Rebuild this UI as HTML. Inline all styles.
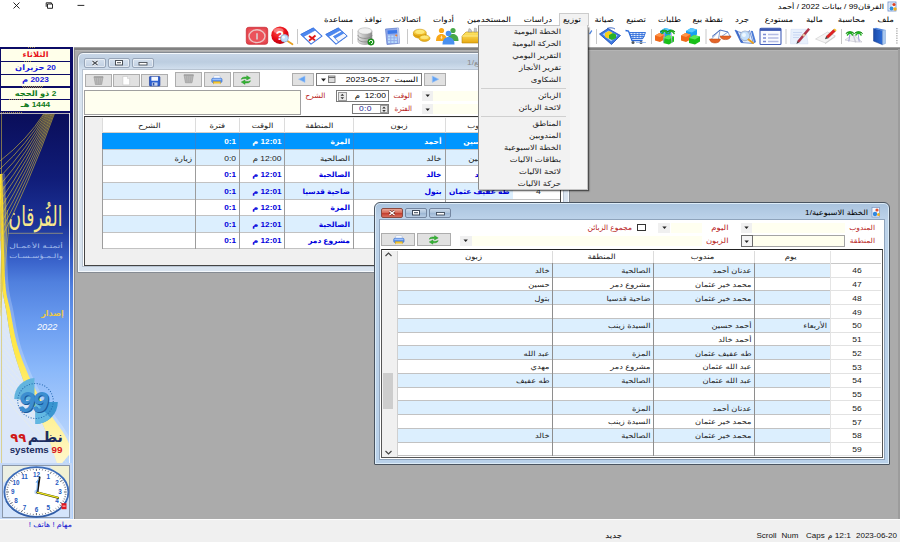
<!DOCTYPE html>
<html lang="ar"><head><meta charset="utf-8"><title>الفرقان99</title>
<style>
html,body{margin:0;padding:0;background:#fff;}
body{width:900px;height:542px;overflow:hidden;position:relative;font-family:"Liberation Sans","DejaVu Sans",sans-serif;font-size:7.3px;color:#000;}
div,span{position:absolute;box-sizing:border-box;white-space:nowrap;}
.t{direction:rtl;text-align:right;line-height:12px;height:12px;transform:scaleX(1.18);transform-origin:100% 50%;}
.c{text-align:center;direction:rtl;line-height:12px;height:12px;transform:scaleX(1.18);transform-origin:50% 50%;}
.l{direction:ltr;text-align:left;line-height:12px;height:12px;transform:scaleX(1.18);transform-origin:0 50%;}
svg{position:absolute;overflow:visible;}
.btn{background:#e1e1e1;border:1px solid #adadad;}
.yl{background:#fffff0;}
.red{color:#b81c1c;}
.bb{color:#0000c8;font-weight:bold;}
.mi{direction:rtl;text-align:right;right:339px;width:100px;height:12px;line-height:12px;font-size:7.3px;color:#1a1a1a;}
</style></head>
<body>
<div class="t " style="left:684px;width:200px;top:0.5px;font-size:7.0px;">الفرقان99 / بيانات 2022 / أحمد</div>
<svg style="left:887px;top:1px" width="11" height="11" viewBox="0 0 11 11"><rect x="1" y="1" width="8" height="9" fill="#f4f8ff" stroke="#6a8cc8" stroke-width="0.8"/><path d="M2.5 3h3M2.5 5h2" stroke="#88a0d0" stroke-width="0.8"/><circle cx="7" cy="3.5" r="1.6" fill="#e04020"/><circle cx="4.5" cy="7.5" r="2" fill="#3090e0"/><circle cx="8" cy="8" r="1.7" fill="#f0b020"/></svg>
<svg style="left:0;top:0" width="100" height="12"><path d="M13.500 2.500l6 6m0-6l-6 6" stroke="#111" stroke-width="0.900" fill="none"/><path d="M47.500 4h5v4.300h-5zM46.200 6.800v-4h5.200v1.200" stroke="#111" stroke-width="0.900" fill="none"/><path d="M77.500 5.400h6.800" stroke="#111" stroke-width="0.900"/></svg>
<div style="left:559px;top:13px;width:30px;height:13px;background:#f2f2f2;border:1px solid #cccccc;border-bottom:none;"></div>
<div class="t " style="left:694px;width:200px;top:13.5px;font-size:7.3px;">ملف</div>
<div class="t " style="left:665px;width:200px;top:13.5px;font-size:7.3px;">محاسبة</div>
<div class="t " style="left:622.5px;width:200px;top:13.5px;font-size:7.3px;">مالية</div>
<div class="t " style="left:592.5px;width:200px;top:13.5px;font-size:7.3px;">مستودع</div>
<div class="t " style="left:549px;width:200px;top:13.5px;font-size:7.3px;">جرد</div>
<div class="t " style="left:523px;width:200px;top:13.5px;font-size:7.3px;">نقطة بيع</div>
<div class="t " style="left:481px;width:200px;top:13.5px;font-size:7.3px;">طلبات</div>
<div class="t " style="left:446px;width:200px;top:13.5px;font-size:7.3px;">تصنيع</div>
<div class="t " style="left:414px;width:200px;top:13.5px;font-size:7.3px;">صيانة</div>
<div class="t " style="left:381px;width:200px;top:13.5px;font-size:7.3px;">توزيع</div>
<div class="t " style="left:352px;width:200px;top:13.5px;font-size:7.3px;">دراسات</div>
<div class="t " style="left:311px;width:200px;top:13.5px;font-size:7.3px;">المستخدمين</div>
<div class="t " style="left:253.5px;width:200px;top:13.5px;font-size:7.3px;">أدوات</div>
<div class="t " style="left:221px;width:200px;top:13.5px;font-size:7.3px;">اتصالات</div>
<div class="t " style="left:182px;width:200px;top:13.5px;font-size:7.3px;">نوافذ</div>
<div class="t " style="left:153px;width:200px;top:13.5px;font-size:7.3px;">مساعدة</div>
<svg style="left:0;top:0" width="900" height="47" viewBox="0 0 900 47"><defs><linearGradient id="gb" x1="0" y1="0" x2="1" y2="0"><stop offset="0" stop-color="#1a4aa8"/><stop offset="1" stop-color="#2c6cd8"/></linearGradient><radialGradient id="gr" cx="0.4" cy="0.3" r="0.75"><stop offset="0" stop-color="#ff5048"/><stop offset="0.6" stop-color="#e40814"/><stop offset="1" stop-color="#b80010"/></radialGradient><linearGradient id="gg" x1="0" y1="0" x2="0" y2="1"><stop offset="0" stop-color="#ffe868"/><stop offset="1" stop-color="#e8a810"/></linearGradient><linearGradient id="gd" x1="0" y1="0" x2="1" y2="0"><stop offset="0" stop-color="#e8e8e8"/><stop offset="0.5" stop-color="#b8b8b8"/><stop offset="1" stop-color="#8c8c8c"/></linearGradient></defs><rect x="896.3" y="28.0" width="1.2" height="1.2" fill="#9c9c9c"/><rect x="896.3" y="30.4" width="1.2" height="1.2" fill="#9c9c9c"/><rect x="896.3" y="32.8" width="1.2" height="1.2" fill="#9c9c9c"/><rect x="896.3" y="35.2" width="1.2" height="1.2" fill="#9c9c9c"/><rect x="896.3" y="37.6" width="1.2" height="1.2" fill="#9c9c9c"/><rect x="896.3" y="40.0" width="1.2" height="1.2" fill="#9c9c9c"/><rect x="896.3" y="42.4" width="1.2" height="1.2" fill="#9c9c9c"/><path d="M841.5 29V44" stroke="#c8c8c8" stroke-width="1"/><path d="M786 29V44" stroke="#c8c8c8" stroke-width="1"/><path d="M706 29V44" stroke="#c8c8c8" stroke-width="1"/><path d="M651.5 29V44" stroke="#c8c8c8" stroke-width="1"/><path d="M596.5 29V44" stroke="#c8c8c8" stroke-width="1"/><path d="M407.5 29V44" stroke="#c8c8c8" stroke-width="1"/><path d="M352.5 29V44" stroke="#c8c8c8" stroke-width="1"/><path d="M297.5 29V44" stroke="#c8c8c8" stroke-width="1"/><path d="M873.5 28.5l9 2.2v14l-9-3.6z" fill="url(#gb)" stroke="#143c90" stroke-width="0.5"/><path d="M873.5 28.5l2.5-0.8 9.5 2.4-3 0.6z" fill="#4c84e0"/><path d="M882.5 30.7l3-0.6v13.4l-3 1.2z" fill="#a8c8f0" stroke="#6c94d0" stroke-width="0.4"/><path d="M845 40l8-6 3 8zM853 34l9 8h-7z" fill="#f0f0f4" stroke="#b4b4c0" stroke-width="0.5"/><path d="M850 33l-1.2 8.5M858 33l1.2 8.5" stroke="#a0a0d8" stroke-width="1"/><path d="M846 33.5c1.5-2.5 6.5-2.5 8 0c-1.5-1-2.5-1-4-0.4c-1.4-0.6-2.500-0.600-4 0.4z M854.5 33.500c1.500-2.500 6.500-2.500 8 0c-1.500-1-2.500-1-4-0.400c-1.400-0.600-2.500-0.600-4 0.400z" fill="#18a818" stroke="#108810" stroke-width="0.8"/><path d="M847 35.500l3-3.500 3 3.500M855.500 35.500l3-3.500 3 3.500" stroke="#20b020" stroke-width="1.3" fill="none"/><path d="M815.5 39l12-7 8 4-10 7z" fill="#f4f4f4" stroke="#c0c0c0" stroke-width="0.5"/><path d="M825 43l10-7v1.300l-10 7z" fill="#d0d0d0"/><path d="M826 36.500l7.500-7 2 1.800-7.500 7z" fill="#e02020" stroke="#a01010" stroke-width="0.4"/><path d="M833.500 29.500l1.200-1 2 1.800-1.200 1z" fill="#f0c020"/><path d="M826 36.500l2 1.800-3 1z" fill="#404040"/><path d="M791 29.3h15l2 14.5h-17.5z" fill="#e8f0fc" stroke="#ccd8f0" stroke-width="0.5"/><path d="M793 32.5h9M793 35h8M793 37.5h6" stroke="#b4c8ec" stroke-width="0.6"/><path d="M797.3 41.3l10.8-13 1.7 1.3-10.8 13z" fill="#b43048" stroke="#8c1828" stroke-width="0.4"/><path d="M802.2 35.4l1.5-1.8 1.7 1.3-1.5 1.8z" fill="#e8c8a0"/><path d="M797.3 41.3l1.7 1.3-2.6 1.3z" fill="#404040"/><rect x="760" y="28.300" width="21" height="16.200" rx="1" fill="#fafbff" stroke="#4460b8" stroke-width="1.100"/><rect x="760" y="28.300" width="21" height="2.600" fill="#3c58b0"/><path d="M763 34.500h3M763 38h3M763 41.500h3" stroke="#7c8cd4" stroke-width="1.300"/><path d="M768 34.500h10.500M768 38h10.500M768 41.500h10.500" stroke="#b4bce4" stroke-width="1.300"/><path d="M735 30l6 12.5 12.5 1-4-13c-2 3-10 3-14.5-0.5z" fill="#e6effb" stroke="#4c78d0" stroke-width="0.8" stroke-linejoin="round"/><path d="M735 30l2.2 0.7 6.3 12-2.5-0.2z" fill="#3c68c8"/><path d="M750.8 30.7l2 0.3 3.2 11-1.8 1.2z" fill="#4c7cd8"/><circle cx="745" cy="35.8" r="4.8" fill="#c4e0fc" stroke="#a8b8d0" stroke-width="1.1"/><circle cx="744" cy="35" r="2" fill="#eef8ff"/><path d="M748.500 39.500l4.500 3.500" stroke="#e8a020" stroke-width="2" stroke-linecap="round"/><path d="M712 36.500l8-6.500 8 2" stroke="#3c64b8" stroke-width="0.900" fill="none"/><path d="M720 30l-8.500 9M720 30l-1.500 9M728 32l-6.500 4.500M728 32l2 4.500" stroke="#3c64b8" stroke-width="0.600"/><path d="M709.500 39h11c-0.500 3-3 4-5.500 4s-5-1-5.500-4z" fill="#e46428" stroke="#b84410" stroke-width="0.500"/><path d="M720 36h11c-0.500 2.800-3 3.600-5.500 3.600s-5-0.800-5.500-3.600z" fill="#e46428" stroke="#b84410" stroke-width="0.500"/><path d="M686 31l5-3 6 1.500v5l-5 3-6-1.500z" fill="#18a0f0"/><path d="M686 31l5-3 6 1.500-5 3z" fill="#58c8ff"/><path d="M681 35.500l4.500-2.500 5 1.500v5l-4.500 2.500-5-1.500z" fill="#f06818"/><path d="M681 35.500l4.500-2.500 5 1.500-4.500 2.500z" fill="#ff9448"/><path d="M689 38l5-3 6 1.500v5l-5 3-6-1.500z" fill="#18c018"/><path d="M689 38l5-3 6 1.500-5 3z" fill="#58e858"/><path d="M660 31l5-3 6 1.500v5l-5 3-6-1.500z" fill="#18a0f0"/><path d="M660 31l5-3 6 1.500-5 3z" fill="#58c8ff"/><path d="M655 35.500l4.500-2.500 5 1.500v5l-4.500 2.500-5-1.500z" fill="#f06818"/><path d="M655 35.500l4.500-2.500 5 1.500-4.500 2.500z" fill="#ff9448"/><path d="M663 38l5-3 6 1.500v5l-5 3-6-1.500z" fill="#18c018"/><path d="M663 38l5-3 6 1.500-5 3z" fill="#58e858"/><path d="M664.500 31l-1 12M671 31l1 12" stroke="#b0a8d8" stroke-width="0.900"/><path d="M660.500 32c1.300-2.500 6-2.500 7.500 0c-1.500-1-2.500-1-3.800-0.400c-1.300-0.600-2.300-0.600-3.700 0.400z M667.500 32c1.300-2.500 6-2.500 7.500 0c-1.500-1-2.500-1-3.800-0.400c-1.300-0.600-2.300-0.600-3.700 0.400z" fill="#18a818" stroke="#108810" stroke-width="0.800"/><path d="M661.500 34l3-3.500 3 3.500M668.500 34l3-3.500 3 3.500" stroke="#20b020" stroke-width="1.200" fill="none"/><path d="M625.500 30.500l3 0.500 3.500 9.500h10.500" stroke="#2868d8" stroke-width="1.300" fill="none"/><path d="M629.500 32.500h16l-2.500 6h-11.500z" fill="#dce8fc" stroke="#2868d8" stroke-width="0.900"/><path d="M633 32.500v6M636 32.500v6M639 32.500v6M642 32.500v6M630 34.500h15M630.500 36.500h14" stroke="#2868d8" stroke-width="0.800"/><circle cx="633" cy="42.500" r="1.500" fill="#505860"/><circle cx="641" cy="42.500" r="1.500" fill="#505860"/><path d="M636 42.500h10" stroke="#88b0f0" stroke-width="0.800"/><path d="M599.500 34l8.500-5.500 12.500 7-9 9z" fill="#3c78e0" stroke="#1c4cb8" stroke-width="0.800" stroke-linejoin="round"/><path d="M602.500 34.200l6-3.700 9 5-6.300 6z" fill="#a8c8f8"/><path d="M605 33l4-2 3 1.500v4l-4 2-3-1.500z" fill="#f8d018"/><path d="M609 35l4-2 3 1.500v3.500l-4 2-3-1.500z" fill="#28b028"/><path d="M607 28.500c2-1 6-1 8 0.500" stroke="#1c4cb8" stroke-width="0.800" fill="none"/><path d="M462 36l4-4h14v11h-18z" fill="url(#gg)" stroke="#b88808" stroke-width="0.600"/><path d="M462 36h18" stroke="#fff4a0" stroke-width="0.800"/><path d="M468 32l1-3.500 2 1 1 2.500zM474 32l0.500-4 2 0.500v3.500z" fill="#c8c8c8" stroke="#8c8c8c" stroke-width="0.400"/><circle cx="441.500" cy="30.500" r="2.600" fill="#f8a818"/><path d="M436 41c0-5 2.500-7 5.500-7s5.500 2 5.500 7z" fill="#f8a818"/><circle cx="453" cy="30.500" r="2.600" fill="#48a848"/><path d="M447.500 41c0-5 2.500-7 5.500-7s5.500 2 5.500 7z" fill="#48a848"/><circle cx="448.500" cy="33.500" r="2.800" fill="#4890f0"/><path d="M442.500 44.500c0-5.500 3-7.500 6-7.500s6 2 6 7.500z" fill="#4890f0"/><path d="M441.500 35l-1 3 1 1 1-1z" fill="#fff" opacity="0.700"/><ellipse cx="419.800" cy="34.600" rx="6.500" ry="3.600" fill="#e8a810" stroke="#c89408" stroke-width="0.500"/><ellipse cx="419.800" cy="32.800" rx="6.500" ry="3.600" fill="url(#gg)" stroke="#c89408" stroke-width="0.600"/><ellipse cx="419.800" cy="32" rx="4.500" ry="2" fill="#fff088" opacity="0.750"/><ellipse cx="424.500" cy="38.200" rx="5.500" ry="3.200" fill="url(#gg)" stroke="#c89408" stroke-width="0.600"/><ellipse cx="424.500" cy="37.500" rx="3.800" ry="1.700" fill="#fff088" opacity="0.700"/><path d="M385.500 29l13-1 1 15.300-12.500 1.200z" fill="#90a8e8" stroke="#5c78c8" stroke-width="0.700" stroke-linejoin="round"/><path d="M398.500 28l1 15.300-1.300 0.200-1-15.400z" fill="#c4d0f0"/><path d="M387.500 30.500l9.500-0.600 0.200 3.400-9.500 0.600z" fill="#3c78e8"/><rect x="388.0" y="35.5" width="2.300" height="1.900" fill="#b8dcfc"/><rect x="391.3" y="35.5" width="2.300" height="1.900" fill="#b8dcfc"/><rect x="394.6" y="35.5" width="2.300" height="1.900" fill="#b8dcfc"/><rect x="388.0" y="38.3" width="2.300" height="1.900" fill="#b8dcfc"/><rect x="391.3" y="38.3" width="2.300" height="1.900" fill="#b8dcfc"/><rect x="394.6" y="38.3" width="2.300" height="1.900" fill="#b8dcfc"/><rect x="388.0" y="41.1" width="2.300" height="1.900" fill="#b8dcfc"/><rect x="391.3" y="41.1" width="2.300" height="1.900" fill="#b8dcfc"/><rect x="394.6" y="41.1" width="2.300" height="1.900" fill="#b8dcfc"/><circle cx="396.300" cy="35.500" r="1.100" fill="#f08030"/><path d="M358 31v10c0 2 3 3.500 7 3.500s7-1.500 7-3.500v-10z" fill="url(#gd)" stroke="#8c8c8c" stroke-width="0.500"/><ellipse cx="365" cy="31" rx="7" ry="3.200" fill="#f0f0f0" stroke="#a0a0a0" stroke-width="0.500"/><path d="M358 35c0 2 3 3.400 7 3.400s7-1.400 7-3.400M358 38.500c0 2 3 3.400 7 3.400s7-1.400 7-3.400" stroke="#7c7c7c" stroke-width="0.700" fill="none"/><circle cx="371" cy="42" r="3.200" fill="#189818" stroke="#0c6c0c" stroke-width="0.500"/><path d="M369.300 42a1.700 1.700 0 1 1 1.700 1.700" stroke="#fff" stroke-width="0.900" fill="none"/><path d="M301 34.400l12.300-6.300 8.700 8-11 8z" fill="#ffffff" stroke="#3c74e0" stroke-width="1.100" stroke-linejoin="round"/><path d="M301 34.400l12.300-6.300 2.200 2-12.200 6.600z" fill="#4c88f0" stroke="#3c74e0" stroke-width="0.600" stroke-linejoin="round"/><path d="M309 36l6 4.300M315.5 35.500l-6.500 5.300" stroke="#e01818" stroke-width="1.900"/><path d="M326 34.400l12.300-6.300 8.700 8-11 8z" fill="#ffffff" stroke="#3c74e0" stroke-width="1.100" stroke-linejoin="round"/><path d="M326 34.400l12.300-6.300 2.200 2-12.200 6.600z" fill="#4c88f0" stroke="#3c74e0" stroke-width="0.600" stroke-linejoin="round"/><path d="M333.5 36.500l9-5 4.500 4.500-8.500 6z" fill="#f4f6fc" stroke="#3c74e0" stroke-width="0.800" stroke-linejoin="round"/><path d="M333.5 36.500l9-5 1.700 1.700-9 5.200z" fill="#4c88f0"/><circle cx="280" cy="35.200" r="8.700" fill="url(#gr)"/><ellipse cx="278.500" cy="30.500" rx="5" ry="2.600" fill="#ffffff" opacity="0.350"/><text x="279.800" y="40" text-anchor="middle" font-family="'Liberation Sans',sans-serif" font-size="13.500" font-weight="bold" fill="#ffffff">?</text><path d="M287.500 41l5 3.300" stroke="#e8a020" stroke-width="1.700" stroke-linecap="round"/><circle cx="284.500" cy="38.300" r="3.700" fill="#c0e0fc" stroke="#98b4d8" stroke-width="0.900"/><circle cx="283.500" cy="37.300" r="1.500" fill="#f0faff"/><rect x="246.300" y="27.300" width="21.400" height="17" rx="2.500" fill="#e4444c" stroke="#cc3038" stroke-width="0.800"/><rect x="248" y="29" width="18" height="13.500" rx="3" fill="#ee5a62" opacity="0.700"/><ellipse cx="257" cy="36.200" rx="8" ry="6.400" fill="none" stroke="#ecc4c4" stroke-width="1.400"/><path d="M257 33.300v6.200" stroke="#dcc8c8" stroke-width="1.700"/></svg>
<svg style="left:588px;top:28px" width="5" height="8"><path d="M1 5.500l2.500-3.500 0.800 1-2.300 3.500z" fill="#4c84e0"/></svg>
<div style="left:74px;top:47px;width:826px;height:472px;background:#ababab;border-left:1px solid #8a8a8a;"></div>
<div style="left:74px;top:47px;width:826px;height:1.4px;background:#a4a4a4;"></div>
<div style="left:74px;top:48.4px;width:826px;height:1.5px;background:#808080;"></div>
<div style="left:75px;top:49.9px;width:825px;height:1.2px;background:#b4b4b4;"></div>
<div style="left:898px;top:49px;width:2px;height:470px;background:#9c9c9c;"></div>
<div style="left:0px;top:519px;width:900px;height:23px;background:#f0f0f0;border-top:1.3px solid #fcfcfc;"></div>
<div class="l " style="left:756.5px;width:200px;top:530px;font-size:8px;color:#111;transform:none;">Scroll</div>
<div class="l " style="left:781.5px;width:200px;top:530px;font-size:8px;color:#111;transform:none;">Num</div>
<div class="l " style="left:806px;width:200px;top:530px;font-size:8px;color:#111;transform:none;">Caps</div>
<div class="l " style="left:856px;width:200px;top:530px;font-size:8px;color:#111;transform:none;">2023-06-20</div>
<div class="t " style="left:650.5px;width:200px;top:530px;font-size:7.3px;color:#111;transform:scaleX(1.05);"><span style="position:static;font-size:8px">12:1</span> م</div>
<div class="t " style="left:422px;width:200px;top:530px;font-size:7.3px;">جديد</div>
<div class="t " style="left:-128px;width:200px;top:519px;font-size:7.2px;color:#2020d0;transform:scaleX(1.1);">مهام ! هاتف !</div>
<div style="left:0;top:47px;width:72.7px;height:472px;background:#0b0b66;"></div>
<div style="left:28px;top:47.3px;width:7px;height:1.2px;background:repeating-linear-gradient(115deg,#c8b040 0,#c8b040 0.8px,transparent 0.8px,transparent 1.8px);opacity:0.75;"></div>
<div style="left:24px;top:60.7px;width:7px;height:1.2px;background:repeating-linear-gradient(115deg,#c8b040 0,#c8b040 0.8px,transparent 0.8px,transparent 1.8px);opacity:0.75;"></div>
<div style="left:22px;top:86.4px;width:21px;height:1.2px;background:repeating-linear-gradient(115deg,#c8b040 0,#c8b040 0.8px,transparent 0.8px,transparent 1.8px);opacity:0.75;"></div>
<div style="left:9px;top:99.1px;width:16px;height:1.2px;background:repeating-linear-gradient(115deg,#c8b040 0,#c8b040 0.8px,transparent 0.8px,transparent 1.8px);opacity:0.75;"></div>
<div style="left:1px;top:111.6px;width:34px;height:1.2px;background:repeating-linear-gradient(115deg,#c8b040 0,#c8b040 0.8px,transparent 0.8px,transparent 1.8px);opacity:0.75;"></div>
<div style="left:1px;top:49px;width:69px;height:11.5px;background:#ffffea;"></div>
<div class="c" style="left:1px;width:69px;top:48.75px;color:#e8141a;font-weight:bold;font-size:7.6px;transform:scaleX(1.09);">الثلاثاء</div>
<div style="left:1px;top:62px;width:69px;height:12px;background:#ffffea;"></div>
<div class="c" style="left:1px;width:69px;top:62.0px;color:#1a1ae0;font-weight:bold;font-size:7.6px;transform:scaleX(1.09);">20 حزيران</div>
<div style="left:1px;top:74.5px;width:69px;height:11.5px;background:#ffffea;"></div>
<div class="c" style="left:1px;width:69px;top:74.25px;color:#1a1ae0;font-weight:bold;font-size:7.6px;transform:scaleX(1.09);">2023 م</div>
<div style="left:1px;top:88px;width:69px;height:11px;background:#ffffea;"></div>
<div class="c" style="left:1px;width:69px;top:87.5px;color:#0f7a1a;font-weight:bold;font-size:7.6px;transform:scaleX(1.09);">2 ذو الحجه</div>
<div style="left:1px;top:99.8px;width:69px;height:11.2px;background:#ffffea;"></div>
<div class="c" style="left:1px;width:69px;top:99.39999999999999px;color:#0f7a1a;font-weight:bold;font-size:7.6px;transform:scaleX(1.09);">1444 هـ</div>
<svg style="left:0px;top:114px" width="70" height="349" viewBox="0 0 69 349" preserveAspectRatio="none"><defs><linearGradient id="lg1" x1="0" y1="0" x2="0" y2="1"><stop offset="0" stop-color="#0a0e5a"/><stop offset="0.19" stop-color="#101c78"/><stop offset="0.33" stop-color="#1c3498"/><stop offset="0.44" stop-color="#3a64cc"/><stop offset="0.5" stop-color="#5080de"/><stop offset="0.62" stop-color="#6a9cf0"/><stop offset="0.76" stop-color="#8ab8fa"/><stop offset="0.93" stop-color="#b0d0fc"/><stop offset="1" stop-color="#bcd8fc"/></linearGradient><linearGradient id="lg2" gradientUnits="userSpaceOnUse" x1="0" y1="86" x2="0" y2="349"><stop offset="0" stop-color="#ffe030"/><stop offset="0.6" stop-color="#ffe84c"/><stop offset="0.85" stop-color="#fff29c"/><stop offset="1" stop-color="#fff8cc"/></linearGradient><clipPath id="cp1"><rect x="0" y="0" width="69" height="349"/></clipPath></defs><rect x="0" y="0" width="69" height="349" fill="url(#lg1)"/><g clip-path="url(#cp1)"><path d="M0 60 C0.0 64.3 -0.3 68.3 0 86 C0.3 103.7 1.0 147.7 2 166 C3.0 184.3 4.3 185.2 6 196 C7.7 206.8 9.5 220.2 12 231 C14.5 241.8 18.0 252.0 21 261 C24.0 270.0 27.2 278.3 30 285 C32.8 291.7 35.0 294.3 38 301 C41.0 307.7 45.0 317.0 48 325 C51.0 333.0 54.3 344.3 56 349 C57.7 353.7 57.7 352.3 58 353 L0 353 L0 60Z" fill="#dbe7fa"/><path d="M-2 150 L70 234" stroke="#fbf6cc" stroke-width="0.5" opacity="0.6"/><path d="M-2 156 L70 240" stroke="#fbf6cc" stroke-width="0.5" opacity="0.6"/><path d="M-2 162 L70 246" stroke="#fbf6cc" stroke-width="0.5" opacity="0.6"/><path d="M-2 168 L70 252" stroke="#fbf6cc" stroke-width="0.5" opacity="0.6"/><path d="M-2 174 L70 258" stroke="#fbf6cc" stroke-width="0.5" opacity="0.6"/><path d="M-2 180 L70 264" stroke="#fbf6cc" stroke-width="0.5" opacity="0.6"/><path d="M-2 186 L70 270" stroke="#fbf6cc" stroke-width="0.5" opacity="0.6"/><path d="M-2 192 L70 276" stroke="#fbf6cc" stroke-width="0.5" opacity="0.6"/><path d="M-2 198 L70 282" stroke="#fbf6cc" stroke-width="0.5" opacity="0.6"/><path d="M-2 204 L70 288" stroke="#fbf6cc" stroke-width="0.5" opacity="0.6"/><path d="M-2 210 L70 294" stroke="#fbf6cc" stroke-width="0.5" opacity="0.6"/><path d="M-2 216 L70 300" stroke="#fbf6cc" stroke-width="0.5" opacity="0.6"/><path d="M-2 222 L70 306" stroke="#fbf6cc" stroke-width="0.5" opacity="0.6"/><path d="M-2 228 L70 312" stroke="#fbf6cc" stroke-width="0.5" opacity="0.6"/><path d="M-2 234 L70 318" stroke="#fbf6cc" stroke-width="0.5" opacity="0.6"/><path d="M-2 240 L70 324" stroke="#fbf6cc" stroke-width="0.5" opacity="0.6"/><path d="M-2 246 L70 330" stroke="#fbf6cc" stroke-width="0.5" opacity="0.6"/><path d="M-2 252 L70 336" stroke="#fbf6cc" stroke-width="0.5" opacity="0.6"/><path d="M-2 258 L70 342" stroke="#fbf6cc" stroke-width="0.5" opacity="0.6"/><path d="M-2 264 L70 348" stroke="#fbf6cc" stroke-width="0.5" opacity="0.6"/><path d="M-2 270 L70 354" stroke="#fbf6cc" stroke-width="0.5" opacity="0.6"/><path d="M-2 276 L70 360" stroke="#fbf6cc" stroke-width="0.5" opacity="0.6"/><path d="M2 60 C2.2 64.3 2.5 68.3 3 86 C3.5 103.7 3.8 147.7 5 166 C6.2 184.3 8.0 185.2 10 196 C12.0 206.8 14.0 220.2 17 231 C20.0 241.8 24.2 252.0 28 261 C31.8 270.0 36.3 278.3 40 285 C43.7 291.7 46.3 295.5 50 301 C53.7 306.5 58.8 313.0 62 318 C65.2 323.0 67.3 328.0 69 331 C70.7 334.0 71.5 335.2 72 336 L72 0 L2 0Z" fill="url(#lg1)"/><path d="M2 60 C2.2 64.3 2.5 68.3 3 86 C3.5 103.7 3.8 147.7 5 166 C6.2 184.3 8.0 185.2 10 196 C12.0 206.8 14.0 220.2 17 231 C20.0 241.8 24.2 252.0 28 261 C31.8 270.0 36.3 278.3 40 285 C43.7 291.7 46.3 295.5 50 301 C53.7 306.5 58.8 313.0 62 318 C65.2 323.0 67.3 328.0 69 331 C70.7 334.0 71.5 335.2 72 336" fill="none" stroke="#ffffff" stroke-opacity="0.22" stroke-width="6"/><path d="M2 60 C2.2 64.3 2.5 68.3 3 86 C3.5 103.7 3.8 147.7 5 166 C6.2 184.3 8.0 185.2 10 196 C12.0 206.8 14.0 220.2 17 231 C20.0 241.8 24.2 252.0 28 261 C31.8 270.0 36.3 278.3 40 285 C43.7 291.7 46.3 295.5 50 301 C53.7 306.5 58.8 313.0 62 318 C65.2 323.0 67.3 328.0 69 331 C70.7 334.0 71.5 335.2 72 336 L58 353 C57.7 352.3 57.7 353.7 56 349 C54.3 344.3 51.0 333.0 48 325 C45.0 317.0 41.0 307.7 38 301 C35.0 294.3 32.8 291.7 30 285 C27.2 278.3 24.0 270.0 21 261 C18.0 252.0 14.5 241.8 12 231 C9.5 220.2 7.7 206.8 6 196 C4.3 185.2 3.0 184.3 2 166 C1.0 147.7 0.3 103.7 0 86 C-0.3 68.3 0.0 64.3 0 60Z" fill="url(#lg2)"/><path d="M43.0 0 Q27.5 25.0 0 47" stroke="#e8cc30" stroke-width="0.6" fill="none" opacity="0.95"/><path d="M44.0 0 Q27.5 29.6 0 55" stroke="#e8cc30" stroke-width="0.6" fill="none" opacity="0.95"/><path d="M45.1 0 Q27.6 34.3 0 63" stroke="#e8cc30" stroke-width="0.6" fill="none" opacity="0.95"/><path d="M46.1 0 Q27.6 39.0 0 71" stroke="#e8cc30" stroke-width="0.6" fill="none" opacity="0.95"/><path d="M47.2 0 Q27.6 43.6 0 79" stroke="#e8cc30" stroke-width="0.6" fill="none" opacity="0.95"/><path d="M48.2 0 Q27.6 48.2 0 87" stroke="#e8cc30" stroke-width="0.6" fill="none" opacity="0.95"/><path d="M49.3 0 Q27.6 52.9 0 95" stroke="#e8cc30" stroke-width="0.6" fill="none" opacity="0.95"/><path d="M50.4 0 Q27.7 57.5 0 103" stroke="#e8cc30" stroke-width="0.6" fill="none" opacity="0.95"/><path d="M51.4 0 Q27.7 62.2 0 111" stroke="#e8cc30" stroke-width="0.6" fill="none" opacity="0.95"/><path d="M52.5 0 Q27.7 66.8 0 119" stroke="#e8cc30" stroke-width="0.6" fill="none" opacity="0.95"/><path d="M53.5 0 Q27.8 71.5 0 127" stroke="#e8cc30" stroke-width="0.6" fill="none" opacity="0.95"/><path d="M2.0 60 C3.0 110 2 140 0 170" stroke="#e8cc30" stroke-width="0.6" fill="none" opacity="0.85"/><path d="M3.8 72 C4.5 110 3 140 0 178" stroke="#e8cc30" stroke-width="0.6" fill="none" opacity="0.85"/><path d="M5.6 84 C6.0 110 4 140 0 186" stroke="#e8cc30" stroke-width="0.6" fill="none" opacity="0.85"/><path d="M7.4 96 C7.5 110 5 140 0 194" stroke="#e8cc30" stroke-width="0.6" fill="none" opacity="0.85"/><path d="M9.2 108 C9.0 110 6 140 0 202" stroke="#e8cc30" stroke-width="0.6" fill="none" opacity="0.85"/><path d="M1.5 0 L1.5 349" stroke="#d8c040" stroke-width="0.7" opacity="0.8"/></g><text x="61.500" y="112.500" transform="translate(0 112.500) scale(1 1.280) translate(0 -112.500)" text-anchor="start" font-family="'Liberation Serif','DejaVu Sans',sans-serif" font-size="21.500" fill="#f8e88c" direction="rtl" textLength="53" lengthAdjust="spacingAndGlyphs">الفُرقان</text><path d="M8 119.300 H62" stroke="#e6d060" stroke-width="0.500"/><text x="62" y="134.5" text-anchor="start" font-family="'Liberation Sans','DejaVu Sans',sans-serif" font-size="6" fill="#a8c0ee" direction="rtl" textLength="53" lengthAdjust="spacingAndGlyphs">أتمتـة الأعمـال</text><text x="62" y="144.500" text-anchor="start" font-family="'Liberation Sans','DejaVu Sans',sans-serif" font-size="6" fill="#a8c0ee" direction="rtl" textLength="53" lengthAdjust="spacingAndGlyphs">والـمـؤسـسـات</text><text x="63" y="202" text-anchor="start" font-family="'Liberation Sans','DejaVu Sans',sans-serif" font-size="8" font-weight="bold" fill="#ecc848" direction="rtl">إصدار</text><text x="46.500" y="216" text-anchor="middle" font-family="'Liberation Sans',sans-serif" font-size="9" font-style="italic" fill="#ffffff">2022</text><g><path d="M34 287 L34 264 A21 21 0 0 0 14 285 Z" fill="#62b4de"/><path d="M35 288 L57 288 A22 22 0 0 1 35 310 Z" fill="#3a96d0"/><path d="M35 288 L35 310 A22 22 0 0 0 50 304 Z" fill="#62b8e2"/><circle cx="35" cy="287" r="17.500" fill="none" stroke="#2468b0" stroke-width="1" stroke-dasharray="1 1.600"/><text x="32.500" y="299" text-anchor="middle" font-family="'Liberation Sans',sans-serif" font-size="29" font-weight="bold" font-style="italic" fill="#1c5a9c" letter-spacing="-2.500">99</text><text x="31.500" y="298" text-anchor="middle" font-family="'Liberation Sans',sans-serif" font-size="29" font-weight="bold" font-style="italic" fill="#3c8ed0" letter-spacing="-2.500">99</text></g><text x="62" y="328" text-anchor="start" font-family="'Liberation Sans','DejaVu Sans',sans-serif" font-size="14" font-weight="bold" fill="#1c2c60" direction="rtl">نظـم</text><text x="10" y="328" font-family="'Liberation Sans','DejaVu Sans',sans-serif" font-size="13" font-weight="bold" fill="#d01818">٩٩</text><text x="9.500" y="339.500" font-family="'Liberation Sans',sans-serif" font-size="9.800" font-weight="bold" fill="#1c2c60" textLength="52" lengthAdjust="spacingAndGlyphs">systems <tspan fill="#d81820">99</tspan></text></svg>
<div style="left:70px;top:113px;width:2.7px;height:406px;background:linear-gradient(#0a0e5a 0px,#101c78 66px,#1c3498 115px,#3a64cc 154px,#5080de 174px,#6a9cf0 216px,#8ab8fa 265px,#a8ccfc 325px,#b0d0fc 349px);"></div>
<div style="left:69px;top:113px;width:1.2px;height:350px;background:rgba(255,255,255,0.85);"></div>
<div style="left:0px;top:113px;width:70px;height:1px;background:rgba(255,250,220,0.7);"></div>
<div style="left:72.7px;top:47px;width:1.4px;height:472px;background:#ececec;"></div>
<div style="left:0;top:463px;width:72px;height:56px;background:#c4d8f6;"></div>
<div style="left:2px;top:465px;width:68px;height:53px;background:#d4e4fb;border:1px solid #8a96a8;"></div>
<svg style="left:0;top:463px" width="72" height="56" viewBox="0 0 72 56"><path d="M3 3 L30 3 L3 20Z" fill="#fdf8d0" opacity="0.55"/><path d="M50 3 L69 3 L69 30Z" fill="#fff6c0" opacity="0.7"/><ellipse cx="36.400" cy="29" rx="32" ry="24.800" fill="#ffffff" stroke="#3c6cb8" stroke-width="1.800"/><path d="M6 38 A32 24.800 0 0 0 66 38" fill="none" stroke="#2a4c90" stroke-width="1" opacity="0.6"/><path d="M36.4 5.7L36.4 8.0" stroke="#303848" stroke-width="0.8"/><path d="M39.6 5.8L39.4 7.1" stroke="#303848" stroke-width="0.6"/><path d="M42.7 6.2L42.3 7.5" stroke="#303848" stroke-width="0.6"/><path d="M45.8 6.8L45.2 8.1" stroke="#303848" stroke-width="0.6"/><path d="M48.7 7.7L48.0 8.9" stroke="#303848" stroke-width="0.6"/><path d="M51.5 8.8L50.1 10.8" stroke="#303848" stroke-width="0.8"/><path d="M54.2 10.1L53.2 11.2" stroke="#303848" stroke-width="0.6"/><path d="M56.7 11.7L55.5 12.7" stroke="#303848" stroke-width="0.6"/><path d="M58.9 13.4L57.7 14.3" stroke="#303848" stroke-width="0.6"/><path d="M60.9 15.3L59.5 16.1" stroke="#303848" stroke-width="0.6"/><path d="M62.6 17.3L60.2 18.5" stroke="#303848" stroke-width="0.8"/><path d="M64.1 19.5L62.5 20.1" stroke="#303848" stroke-width="0.6"/><path d="M65.2 21.8L63.6 22.2" stroke="#303848" stroke-width="0.6"/><path d="M66.0 24.2L64.4 24.4" stroke="#303848" stroke-width="0.6"/><path d="M66.5 26.6L64.8 26.7" stroke="#303848" stroke-width="0.6"/><path d="M66.7 29.0L63.9 29.0" stroke="#303848" stroke-width="0.8"/><path d="M66.5 31.4L64.8 31.3" stroke="#303848" stroke-width="0.6"/><path d="M66.0 33.8L64.4 33.6" stroke="#303848" stroke-width="0.6"/><path d="M65.2 36.2L63.6 35.8" stroke="#303848" stroke-width="0.6"/><path d="M64.1 38.5L62.5 37.9" stroke="#303848" stroke-width="0.6"/><path d="M62.6 40.6L60.2 39.5" stroke="#303848" stroke-width="0.8"/><path d="M60.9 42.7L59.5 41.9" stroke="#303848" stroke-width="0.6"/><path d="M58.9 44.6L57.7 43.7" stroke="#303848" stroke-width="0.6"/><path d="M56.7 46.3L55.5 45.3" stroke="#303848" stroke-width="0.6"/><path d="M54.2 47.9L53.2 46.8" stroke="#303848" stroke-width="0.6"/><path d="M51.5 49.2L50.1 47.2" stroke="#303848" stroke-width="0.8"/><path d="M48.7 50.3L48.0 49.1" stroke="#303848" stroke-width="0.6"/><path d="M45.8 51.2L45.2 49.9" stroke="#303848" stroke-width="0.6"/><path d="M42.7 51.8L42.3 50.5" stroke="#303848" stroke-width="0.6"/><path d="M39.6 52.2L39.4 50.9" stroke="#303848" stroke-width="0.6"/><path d="M36.4 52.3L36.4 50.0" stroke="#303848" stroke-width="0.8"/><path d="M33.2 52.2L33.4 50.9" stroke="#303848" stroke-width="0.6"/><path d="M30.1 51.8L30.5 50.5" stroke="#303848" stroke-width="0.6"/><path d="M27.0 51.2L27.6 49.9" stroke="#303848" stroke-width="0.6"/><path d="M24.1 50.3L24.8 49.1" stroke="#303848" stroke-width="0.6"/><path d="M21.2 49.2L22.6 47.2" stroke="#303848" stroke-width="0.8"/><path d="M18.6 47.9L19.6 46.8" stroke="#303848" stroke-width="0.6"/><path d="M16.1 46.3L17.3 45.3" stroke="#303848" stroke-width="0.6"/><path d="M13.9 44.6L15.1 43.7" stroke="#303848" stroke-width="0.6"/><path d="M11.9 42.7L13.3 41.9" stroke="#303848" stroke-width="0.6"/><path d="M10.2 40.7L12.6 39.5" stroke="#303848" stroke-width="0.8"/><path d="M8.7 38.5L10.3 37.9" stroke="#303848" stroke-width="0.6"/><path d="M7.6 36.2L9.2 35.8" stroke="#303848" stroke-width="0.6"/><path d="M6.8 33.8L8.4 33.6" stroke="#303848" stroke-width="0.6"/><path d="M6.3 31.4L8.0 31.3" stroke="#303848" stroke-width="0.6"/><path d="M6.1 29.0L8.9 29.0" stroke="#303848" stroke-width="0.8"/><path d="M6.3 26.6L8.0 26.7" stroke="#303848" stroke-width="0.6"/><path d="M6.8 24.2L8.4 24.4" stroke="#303848" stroke-width="0.6"/><path d="M7.6 21.8L9.2 22.2" stroke="#303848" stroke-width="0.6"/><path d="M8.7 19.5L10.3 20.1" stroke="#303848" stroke-width="0.6"/><path d="M10.2 17.3L12.6 18.5" stroke="#303848" stroke-width="0.8"/><path d="M11.9 15.3L13.3 16.1" stroke="#303848" stroke-width="0.6"/><path d="M13.9 13.4L15.1 14.3" stroke="#303848" stroke-width="0.6"/><path d="M16.1 11.7L17.3 12.7" stroke="#303848" stroke-width="0.6"/><path d="M18.6 10.1L19.6 11.2" stroke="#303848" stroke-width="0.6"/><path d="M21.2 8.8L22.6 10.8" stroke="#303848" stroke-width="0.8"/><path d="M24.1 7.7L24.8 8.9" stroke="#303848" stroke-width="0.6"/><path d="M27.0 6.8L27.6 8.1" stroke="#303848" stroke-width="0.6"/><path d="M30.1 6.2L30.5 7.5" stroke="#303848" stroke-width="0.6"/><path d="M33.2 5.8L33.4 7.1" stroke="#303848" stroke-width="0.6"/><text x="48.2" y="15.9" text-anchor="middle" font-family="'Liberation Sans',sans-serif" font-size="6.300" font-weight="bold" fill="#2458c0">1</text><text x="56.9" y="22.3" text-anchor="middle" font-family="'Liberation Sans',sans-serif" font-size="6.300" font-weight="bold" fill="#2458c0">2</text><text x="60.1" y="31.2" text-anchor="middle" font-family="'Liberation Sans',sans-serif" font-size="6.300" font-weight="bold" fill="#2458c0">3</text><text x="56.9" y="40.0" text-anchor="middle" font-family="'Liberation Sans',sans-serif" font-size="6.300" font-weight="bold" fill="#2458c0">4</text><text x="48.2" y="46.5" text-anchor="middle" font-family="'Liberation Sans',sans-serif" font-size="6.300" font-weight="bold" fill="#2458c0">5</text><text x="36.4" y="48.9" text-anchor="middle" font-family="'Liberation Sans',sans-serif" font-size="6.300" font-weight="bold" fill="#2458c0">6</text><text x="24.5" y="46.5" text-anchor="middle" font-family="'Liberation Sans',sans-serif" font-size="6.300" font-weight="bold" fill="#2458c0">7</text><text x="15.9" y="40.1" text-anchor="middle" font-family="'Liberation Sans',sans-serif" font-size="6.300" font-weight="bold" fill="#2458c0">8</text><text x="12.7" y="31.2" text-anchor="middle" font-family="'Liberation Sans',sans-serif" font-size="6.300" font-weight="bold" fill="#2458c0">9</text><text x="15.9" y="22.3" text-anchor="middle" font-family="'Liberation Sans',sans-serif" font-size="6.300" font-weight="bold" fill="#2458c0">10</text><text x="24.5" y="15.9" text-anchor="middle" font-family="'Liberation Sans',sans-serif" font-size="6.300" font-weight="bold" fill="#2458c0">11</text><text x="36.4" y="13.5" text-anchor="middle" font-family="'Liberation Sans',sans-serif" font-size="6.300" font-weight="bold" fill="#2458c0">12</text><circle cx="36.500" cy="29" r="2.200" fill="#a8c8f8" opacity="0.8"/><path d="M37.500 29.500 L39.600 14.500" stroke="#101010" stroke-width="1.800" stroke-linecap="round"/><path d="M36.800 28.500 L37.600 17.500 L36.300 19.500 L38.900 15.500" stroke="#6aa8f0" stroke-width="1" fill="none"/><path d="M37.500 29.500 L58 34.800" stroke="#3c3800" stroke-width="2.200" stroke-linecap="round"/><path d="M37.500 29.300 L58 34.600" stroke="#f0e820" stroke-width="1.300" stroke-linecap="round"/><rect x="61.500" y="40.200" width="5" height="6" fill="#e01820"/><rect x="62.500" y="42.600" width="3" height="1" fill="#ffffff" opacity="0.8"/></svg>
<div style="left:76.5px;top:52px;width:493px;height:221px;border:1px solid #858b93;border-radius:6px 6px 1px 1px;background:linear-gradient(#c9d7e8,#bccde0 9px,#d0deed 16px,#d9e4f0 18px,#d9e4f0);box-shadow:inset 0 0 0 1px #f4f8fc;"></div>
<div style="left:82px;top:69px;width:482px;height:198px;background:#ffffff;border:1px solid #b8c4d2;"></div>
<div style="left:84px;top:58px;width:22px;height:10px;border:1px solid #97a5b8;border-radius:2px;background:linear-gradient(#d6e1ee,#c0cfe2);box-shadow:inset 0 0 0 1px rgba(255,255,255,0.5);"></div>
<div style="left:108px;top:58px;width:22px;height:10px;border:1px solid #97a5b8;border-radius:2px;background:linear-gradient(#d6e1ee,#c0cfe2);box-shadow:inset 0 0 0 1px rgba(255,255,255,0.5);"></div>
<div style="left:132px;top:58px;width:22px;height:10px;border:1px solid #97a5b8;border-radius:2px;background:linear-gradient(#d6e1ee,#c0cfe2);box-shadow:inset 0 0 0 1px rgba(255,255,255,0.5);"></div>
<svg style="left:84px;top:58px" width="72" height="10"><path d="M8.5 3l5 4m0-4l-5 4" stroke="#fff" stroke-width="2.6"/><path d="M8.5 3l5 4m0-4l-5 4" stroke="#4a5058" stroke-width="1.2"/><rect x="31.5" y="2.5" width="7" height="4.5" fill="#fff" stroke="#4a5058" stroke-width="1"/><path d="M33 4.7h4" stroke="#4a5058" stroke-width="1"/><rect x="55" y="4.5" width="8" height="2.5" fill="#fff" stroke="#4a5058" stroke-width="0.9"/></svg>
<div class="l" style="left:467px;top:56.5px;width:80px;font-size:7.2px;color:#8a8a8a;direction:rtl;text-align:left;">توزيع/1</div>
<div class="btn" style="left:85px;top:74.3px;width:26.5px;height:12.4px;"></div>
<div class="btn" style="left:113.3px;top:74.3px;width:26.5px;height:12.4px;"></div>
<div class="btn" style="left:141.3px;top:74.3px;width:26.5px;height:12.4px;"></div>
<div class="btn" style="left:175px;top:71.5px;width:26.5px;height:15px;"></div>
<div class="btn" style="left:204.4px;top:71.5px;width:26.5px;height:15px;"></div>
<div class="btn" style="left:233.3px;top:71.5px;width:26.5px;height:15px;"></div>
<svg style="left:92.5px;top:76px" width="11.049999999999999" height="9.35" viewBox="0 0 13 11"><path d="M1.2 1h10.6l-1.6 9h-7.4z" fill="#b8b8b8" stroke="#8c8c8c" stroke-width="0.6"/><path d="M1 1.2h11" stroke="#9a9a9a" stroke-width="1.2"/><path d="M4 2.5l0.6 7M6.5 2.5v7M9 2.5l-0.6 7" stroke="#a4a4a4" stroke-width="0.7"/></svg>
<svg style="left:122px;top:76px" width="8.5" height="9.35" viewBox="0 0 10 11"><path d="M1 0.5h5.5l2.5 2.5v7.5h-8z" fill="#ffffff" stroke="#c4c4c4" stroke-width="0.7"/><path d="M6.5 0.5v2.5h2.5" fill="#eee" stroke="#c4c4c4" stroke-width="0.6"/></svg>
<svg style="left:149px;top:75.8px" width="11.399999999999999" height="10.45" viewBox="0 0 12 11"><rect x="0.5" y="0.5" width="11" height="10" rx="0.8" fill="#2c60d0" stroke="#1c3c98" stroke-width="0.7"/><rect x="2.5" y="0.8" width="7" height="4.2" fill="#f4f8ff"/><rect x="3" y="6.8" width="6" height="3.5" fill="#c8d4ec"/><rect x="4" y="7.4" width="1.6" height="2.6" fill="#2c50a8"/></svg>
<svg style="left:183px;top:74.3px" width="11.44" height="9.68" viewBox="0 0 13 11"><path d="M1.2 1h10.6l-1.6 9h-7.4z" fill="#b8b8b8" stroke="#8c8c8c" stroke-width="0.6"/><path d="M1 1.2h11" stroke="#9a9a9a" stroke-width="1.2"/><path d="M4 2.5l0.6 7M6.5 2.5v7M9 2.5l-0.6 7" stroke="#a4a4a4" stroke-width="0.7"/></svg>
<svg style="left:211.3px;top:74.6px" width="11.76" height="10.08" viewBox="0 0 14 12"><path d="M3.5 0.8h7l0.8 3.5h-8.6z" fill="#ffffff" stroke="#a8b8d8" stroke-width="0.6"/><rect x="0.8" y="3.8" width="12.4" height="5.2" rx="1.6" fill="#5c94ec" stroke="#3468c8" stroke-width="0.6"/><rect x="1.5" y="4.4" width="11" height="1.6" rx="0.8" fill="#9cc0fa"/><rect x="3" y="8" width="8" height="2.6" fill="#f8c828" stroke="#d09c10" stroke-width="0.5"/><rect x="3.4" y="10.2" width="7.2" height="1" fill="#f0f0f0"/></svg>
<svg style="left:240.3px;top:74.8px" width="11.76" height="10.08" viewBox="0 0 14 12"><path d="M1.5 5.2C2 2.6 5 2 8 2.6V0.8L12.5 3.6 8 6V4.4C5.5 4 3.5 4.2 1.5 5.2z" fill="#34b434" stroke="#1c8c1c" stroke-width="0.5"/><path d="M12.5 6.8C12 9.4 9 10 6 9.4V11.2L1.5 8.4 6 6V7.6C8.5 8 10.5 7.8 12.5 6.8z" fill="#34b434" stroke="#1c8c1c" stroke-width="0.5"/></svg>
<div class="btn" style="left:291.5px;top:73px;width:22.5px;height:12.5px;"></div>
<div class="btn" style="left:424px;top:73px;width:21.7px;height:12.5px;"></div>
<svg style="left:291px;top:73px" width="160" height="13"><path d="M14 3v6.400l-6.500-3.200z" fill="#62a2f2" stroke="#9cc4f8" stroke-width="0.600"/><path d="M141.300 3v6.400l6.500-3.200z" fill="#62a2f2" stroke="#9cc4f8" stroke-width="0.600"/></svg>
<div style="left:316px;top:73px;width:106px;height:12.5px;background:#fff;border:1px solid #7a7a7a;"></div>
<div class="t" style="left:338.500px;width:79px;top:73.5px;font-size:7.2px;">السبت&nbsp; <span style="position:static;direction:ltr;unicode-bidi:embed;font-size:7.3px">2023-05-27</span></div>
<svg style="left:318px;top:74px" width="20" height="11"><path d="M3 4.5h5l-2.5 3z" fill="#222"/><rect x="10.5" y="2" width="6.5" height="6.5" fill="#dcdcdc" stroke="#666" stroke-width="0.8"/><path d="M10.5 3.5h6.5" stroke="#666" stroke-width="1"/></svg>
<div style="left:84px;top:90px;width:217px;height:25px;background:#fffff0;border:1px solid #a0a0a0;"></div>
<div class="t red" style="left:300px;width:25.5px;top:90px;font-size:7.2px;transform:scaleX(1.06);">الشرح</div>
<div style="left:335.5px;top:90px;width:53.5px;height:12px;background:#fff;border:1px solid #7a7a7a;"></div>
<div class="t" style="left:350px;width:36px;top:90px;font-size:7.2px;">12:00&nbsp; م</div>
<div style="left:338px;top:91.5px;width:8.5px;height:9px;background:#e8e8e8;border:1px solid #9a9a9a;"></div>
<svg style="left:338px;top:91.5px" width="9" height="9"><path d="M2.5 3.7l1.8-2 1.8 2zM2.5 5.3l1.8 2 1.8-2z" fill="#333"/></svg>
<div class="t red" style="left:385px;width:27px;top:90px;font-size:7.2px;transform:scaleX(1);">الوقت</div>
<div style="left:351.5px;top:103.5px;width:37.5px;height:10.5px;background:#fff;border:1px solid #7a7a7a;"></div>
<div class="l" style="left:358.5px;width:20px;top:103px;font-size:7.2px;color:#1a1a90;letter-spacing:0.3px;">0:0</div>
<div style="left:380px;top:104.5px;width:8px;height:8.5px;background:#e8e8e8;border:1px solid #9a9a9a;"></div>
<svg style="left:380px;top:104.5px" width="9" height="9"><path d="M2.2 3.5l1.8-2 1.8 2zM2.2 5l1.8 2 1.8-2z" fill="#333"/></svg>
<div class="t red" style="left:385px;width:27px;top:103px;font-size:7.2px;transform:scaleX(0.98);">الفترة</div>
<div class="yl" style="left:432.5px;top:90.5px;width:128px;height:10px;"></div>
<div style="left:421.5px;top:90.5px;width:11px;height:10px;background:#f0f0f0;"></div>
<svg style="left:421.5px;top:90.0px" width="11" height="11"><path d="M3.5 4.500h4.400l-2.200 2.400z" fill="#222"/></svg>
<div class="yl" style="left:432.5px;top:104px;width:128px;height:10px;"></div>
<div style="left:421.5px;top:104px;width:11px;height:10px;background:#f0f0f0;"></div>
<svg style="left:421.5px;top:103.5px" width="11" height="11"><path d="M3.5 4.500h4.400l-2.200 2.400z" fill="#222"/></svg>
<div style="left:84px;top:116px;width:477px;height:150px;background:#f0f0f0;border:1px solid #444;border-top:1.5px solid #333;"></div>
<div style="left:102.5px;top:117.5px;width:457px;height:15.5px;background:#fff;"></div>
<div class="c" style="left:102.5px;width:92.5px;top:119.5px;font-size:7.2px;color:#222;">الشرح</div>
<div class="c" style="left:195px;width:44.5px;top:119.5px;font-size:7.2px;color:#222;">فترة</div>
<div class="c" style="left:239.5px;width:45.0px;top:119.5px;font-size:7.2px;color:#222;">الوقت</div>
<div class="c" style="left:284.5px;width:68.5px;top:119.5px;font-size:7.2px;color:#222;">المنطقة</div>
<div class="c" style="left:353px;width:92px;top:119.5px;font-size:7.2px;color:#222;">زبون</div>
<div class="c" style="left:445px;width:68px;top:119.5px;font-size:7.2px;color:#222;">مندوب</div>
<div class="c" style="left:513px;width:46.5px;top:119.5px;font-size:7.2px;color:#222;">#</div>
<div style="left:102.5px;top:132.80px;width:457px;height:16.55px;background:#0096ff;"></div>
<div class="t" style="left:195px;width:41.0px;top:136.10px;font-size:7.2px;color:#ffffff;font-weight:bold;transform:scaleX(1.14);">0:1</div>
<div class="t" style="left:239.5px;width:41.5px;top:136.10px;font-size:7.2px;color:#ffffff;font-weight:bold;transform:scaleX(1.14);">12:01 م</div>
<div class="t" style="left:284.5px;width:65.0px;top:136.10px;font-size:7.2px;color:#ffffff;font-weight:bold;transform:scaleX(1.04);">المزة</div>
<div class="t" style="left:353px;width:88.5px;top:136.10px;font-size:7.2px;color:#ffffff;font-weight:bold;transform:scaleX(1.04);">أحمد</div>
<div class="t" style="left:445px;width:64.5px;top:136.10px;font-size:7.2px;color:#ffffff;font-weight:bold;transform:scaleX(1.04);">عدنان حسين</div>
<div class="c" style="left:514.5px;width:46.5px;top:136.10px;font-size:7.2px;color:#fff;">1</div>
<div style="left:102.5px;top:149.35px;width:457px;height:16.55px;background:#dceffe;"></div>
<div style="left:513px;top:149.35px;width:46.5px;height:16.55px;background:#fff;"></div>
<div class="t" style="left:102.5px;width:89.0px;top:152.65px;font-size:7.2px;color:#1a1a1a;font-weight:normal;transform:scaleX(1.18);">زيارة</div>
<div class="t" style="left:195px;width:41.0px;top:152.65px;font-size:7.2px;color:#1a1a1a;font-weight:normal;transform:scaleX(1.18);">0:0</div>
<div class="t" style="left:239.5px;width:41.5px;top:152.65px;font-size:7.2px;color:#1a1a1a;font-weight:normal;transform:scaleX(1.18);">12:00 م</div>
<div class="t" style="left:284.5px;width:65.0px;top:152.65px;font-size:7.2px;color:#1a1a1a;font-weight:normal;transform:scaleX(1.18);">الصالحية</div>
<div class="t" style="left:353px;width:88.5px;top:152.65px;font-size:7.2px;color:#1a1a1a;font-weight:normal;transform:scaleX(1.18);">خالد</div>
<div class="t" style="left:445px;width:64.5px;top:152.65px;font-size:7.2px;color:#1a1a1a;font-weight:normal;transform:scaleX(1.18);">أحمد حسين</div>
<div class="c" style="left:514.5px;width:46.5px;top:152.65px;font-size:7.2px;color:#222;">2</div>
<div style="left:102.5px;top:165.90px;width:457px;height:16.55px;background:#ffffff;"></div>
<div style="left:513px;top:165.90px;width:46.5px;height:16.55px;background:#fff;"></div>
<div class="t" style="left:195px;width:41.0px;top:169.20px;font-size:7.2px;color:#0000dc;font-weight:bold;transform:scaleX(1.14);">0:1</div>
<div class="t" style="left:239.5px;width:41.5px;top:169.20px;font-size:7.2px;color:#0000dc;font-weight:bold;transform:scaleX(1.14);">12:01 م</div>
<div class="t" style="left:284.5px;width:65.0px;top:169.20px;font-size:7.2px;color:#0000dc;font-weight:bold;transform:scaleX(1.04);">الصالحية</div>
<div class="t" style="left:353px;width:88.5px;top:169.20px;font-size:7.2px;color:#0000dc;font-weight:bold;transform:scaleX(1.04);">خالد</div>
<div class="t" style="left:445px;width:64.5px;top:169.20px;font-size:7.2px;color:#0000dc;font-weight:bold;transform:scaleX(1.04);">أحمد خالد</div>
<div class="c" style="left:514.5px;width:46.5px;top:169.20px;font-size:7.2px;color:#222;">3</div>
<div style="left:102.5px;top:182.45px;width:457px;height:16.55px;background:#dceffe;"></div>
<div style="left:513px;top:182.45px;width:46.5px;height:16.55px;background:#fff;"></div>
<div class="t" style="left:195px;width:41.0px;top:185.75px;font-size:7.2px;color:#0000dc;font-weight:bold;transform:scaleX(1.14);">0:1</div>
<div class="t" style="left:239.5px;width:41.5px;top:185.75px;font-size:7.2px;color:#0000dc;font-weight:bold;transform:scaleX(1.14);">12:01 م</div>
<div class="t" style="left:284.5px;width:65.0px;top:185.75px;font-size:7.2px;color:#0000dc;font-weight:bold;transform:scaleX(1.04);">ضاحية قدسيا</div>
<div class="t" style="left:353px;width:88.5px;top:185.75px;font-size:7.2px;color:#0000dc;font-weight:bold;transform:scaleX(1.04);">بتول</div>
<div class="t" style="left:445px;width:64.5px;top:185.75px;font-size:7.2px;color:#0000dc;font-weight:bold;transform:scaleX(1.04);">طه عفيف عثمان</div>
<div class="c" style="left:514.5px;width:46.5px;top:185.75px;font-size:7.2px;color:#222;">4</div>
<div style="left:102.5px;top:199.00px;width:457px;height:16.55px;background:#ffffff;"></div>
<div style="left:513px;top:199.00px;width:46.5px;height:16.55px;background:#fff;"></div>
<div class="t" style="left:195px;width:41.0px;top:202.30px;font-size:7.2px;color:#0000dc;font-weight:bold;transform:scaleX(1.14);">0:1</div>
<div class="t" style="left:239.5px;width:41.5px;top:202.30px;font-size:7.2px;color:#0000dc;font-weight:bold;transform:scaleX(1.14);">12:01 م</div>
<div class="t" style="left:284.5px;width:65.0px;top:202.30px;font-size:7.2px;color:#0000dc;font-weight:bold;transform:scaleX(1.04);">المزة</div>
<div class="c" style="left:514.5px;width:46.5px;top:202.30px;font-size:7.2px;color:#222;">5</div>
<div style="left:102.5px;top:215.55px;width:457px;height:16.55px;background:#dceffe;"></div>
<div style="left:513px;top:215.55px;width:46.5px;height:16.55px;background:#fff;"></div>
<div class="t" style="left:195px;width:41.0px;top:218.85px;font-size:7.2px;color:#0000dc;font-weight:bold;transform:scaleX(1.14);">0:1</div>
<div class="t" style="left:239.5px;width:41.5px;top:218.85px;font-size:7.2px;color:#0000dc;font-weight:bold;transform:scaleX(1.14);">12:01 م</div>
<div class="t" style="left:284.5px;width:65.0px;top:218.85px;font-size:7.2px;color:#0000dc;font-weight:bold;transform:scaleX(1.04);">الصالحية</div>
<div class="c" style="left:514.5px;width:46.5px;top:218.85px;font-size:7.2px;color:#222;">6</div>
<div style="left:102.5px;top:232.10px;width:457px;height:16.55px;background:#ffffff;"></div>
<div style="left:513px;top:232.10px;width:46.5px;height:16.55px;background:#fff;"></div>
<div class="t" style="left:195px;width:41.0px;top:235.40px;font-size:7.2px;color:#0000dc;font-weight:bold;transform:scaleX(1.14);">0:1</div>
<div class="t" style="left:239.5px;width:41.5px;top:235.40px;font-size:7.2px;color:#0000dc;font-weight:bold;transform:scaleX(1.14);">12:01 م</div>
<div class="t" style="left:284.5px;width:65.0px;top:235.40px;font-size:7.2px;color:#0000dc;font-weight:bold;transform:scaleX(1.04);">مشروع دمر</div>
<div class="c" style="left:514.5px;width:46.5px;top:235.40px;font-size:7.2px;color:#222;">7</div>
<div style="left:102.5px;top:132.3px;width:457px;height:1px;background:#d8d0c8;"></div>
<div style="left:102.5px;top:148.85px;width:457px;height:1px;background:#c2c2c2;"></div>
<div style="left:102.5px;top:165.40px;width:457px;height:1px;background:#c2c2c2;"></div>
<div style="left:102.5px;top:181.95px;width:457px;height:1px;background:#c2c2c2;"></div>
<div style="left:102.5px;top:198.50px;width:457px;height:1px;background:#c2c2c2;"></div>
<div style="left:102.5px;top:215.05px;width:457px;height:1px;background:#c2c2c2;"></div>
<div style="left:102.5px;top:231.60px;width:457px;height:1px;background:#c2c2c2;"></div>
<div style="left:102.5px;top:248.15px;width:457px;height:1px;background:#c2c2c2;"></div>
<div style="left:102.0px;top:117.5px;width:1px;height:15.5px;background:#dcdcdc;"></div>
<div style="left:102.0px;top:149.35px;width:1px;height:99.30px;background:#9c9c9c;"></div>
<div style="left:102.0px;top:132.8px;width:1px;height:16.55px;background:#2c86d8;"></div>
<div style="left:194.5px;top:117.5px;width:1px;height:15.5px;background:#dcdcdc;"></div>
<div style="left:194.5px;top:149.35px;width:1px;height:99.30px;background:#9c9c9c;"></div>
<div style="left:194.5px;top:132.8px;width:1px;height:16.55px;background:#2c86d8;"></div>
<div style="left:239.0px;top:117.5px;width:1px;height:15.5px;background:#dcdcdc;"></div>
<div style="left:239.0px;top:149.35px;width:1px;height:99.30px;background:#9c9c9c;"></div>
<div style="left:239.0px;top:132.8px;width:1px;height:16.55px;background:#2c86d8;"></div>
<div style="left:284.0px;top:117.5px;width:1px;height:15.5px;background:#dcdcdc;"></div>
<div style="left:284.0px;top:149.35px;width:1px;height:99.30px;background:#9c9c9c;"></div>
<div style="left:284.0px;top:132.8px;width:1px;height:16.55px;background:#2c86d8;"></div>
<div style="left:352.5px;top:117.5px;width:1px;height:15.5px;background:#dcdcdc;"></div>
<div style="left:352.5px;top:149.35px;width:1px;height:99.30px;background:#9c9c9c;"></div>
<div style="left:352.5px;top:132.8px;width:1px;height:16.55px;background:#2c86d8;"></div>
<div style="left:444.5px;top:117.5px;width:1px;height:15.5px;background:#dcdcdc;"></div>
<div style="left:444.5px;top:149.35px;width:1px;height:99.30px;background:#9c9c9c;"></div>
<div style="left:444.5px;top:132.8px;width:1px;height:16.55px;background:#2c86d8;"></div>
<div style="left:512.5px;top:117.5px;width:1px;height:15.5px;background:#dcdcdc;"></div>
<div style="left:373.5px;top:202px;width:516.5px;height:262.5px;border:1px solid #4a5460;border-radius:6px 6px 1px 1px;background:linear-gradient(#a9c3de,#bdd3ea 17px,#b9d1ea);box-shadow:inset 0 0 0 1px #dcecf8;"></div>
<div style="left:378.5px;top:219px;width:506.5px;height:240.5px;background:#ffffff;border:1px solid #8fa4bc;"></div>
<div style="left:380.7px;top:207.5px;width:22.3px;height:10px;border:1px solid #8c4a40;border-radius:2px;background:linear-gradient(#eaa898,#d66a58 45%,#c23c2c 52%,#d87060);"></div>
<div style="left:405px;top:207.5px;width:22px;height:10px;border:1px solid #7486a0;border-radius:2px;background:linear-gradient(#cbdaeb,#aec4dc 45%,#9cb6d4 52%,#b8cde4);"></div>
<div style="left:428.8px;top:207.5px;width:22px;height:10px;border:1px solid #7486a0;border-radius:2px;background:linear-gradient(#cbdaeb,#aec4dc 45%,#9cb6d4 52%,#b8cde4);"></div>
<svg style="left:381px;top:207.5px" width="72" height="10"><path d="M8.5 3l5 4m0-4l-5 4" stroke="#6a2018" stroke-width="2.8"/><path d="M8.5 3l5 4m0-4l-5 4" stroke="#fff" stroke-width="1.5"/><rect x="31.5" y="2.5" width="7" height="4.5" fill="#fff" stroke="#3c4858" stroke-width="1"/><path d="M33 4.7h4" stroke="#3c4858" stroke-width="1"/><rect x="55.5" y="4.5" width="8" height="2.5" fill="#fff" stroke="#3c4858" stroke-width="0.9"/></svg>
<div class="t" style="left:768px;width:100px;top:206.5px;font-size:7.3px;color:#000;transform:scaleX(1.13);">الخطة الاسبوعية/1</div>
<svg style="left:871px;top:207px" width="10" height="11" viewBox="0 0 10 11"><rect x="1" y="0.5" width="7.5" height="9.5" fill="#f4f8ff" stroke="#7a94c4" stroke-width="0.7"/><circle cx="6" cy="3" r="1.6" fill="#e05030"/><circle cx="4" cy="7" r="2.2" fill="#3088e0"/><circle cx="7.5" cy="7.5" r="1.5" fill="#f0b020"/></svg>
<div class="t red" style="left:829.5px;width:45px;top:222.3px;font-size:6.9px;transform:scaleX(1.1);">المندوب</div>
<div class="yl" style="left:752px;top:222.8px;width:93px;height:10px;"></div>
<div style="left:741px;top:222.8px;width:11px;height:10px;background:#f0f0f0;"></div>
<svg style="left:741px;top:222.3px" width="11" height="11"><path d="M3.3 4.5h4.4l-2.2 2.4z" fill="#222"/></svg>
<div class="t red" style="left:690px;width:38.5px;top:222px;font-size:7.2px;">اليوم</div>
<div class="yl" style="left:670.5px;top:222.8px;width:31.5px;height:10px;"></div>
<div style="left:658.2px;top:222.8px;width:12.3px;height:10px;background:#f0f0f0;"></div>
<svg style="left:658.7px;top:222.3px" width="11" height="11"><path d="M3.3 4.5h4.4l-2.2 2.4z" fill="#222"/></svg>
<div style="left:637.2px;top:223.5px;width:8.8px;height:7.8px;background:#fff;border:1px solid #333;"></div>
<div class="t red" style="left:558.5px;width:73px;top:222px;font-size:7.2px;transform:scaleX(1.05);">مجموع الزبائن</div>
<div class="t red" style="left:829.5px;width:45px;top:235px;font-size:6.9px;transform:scaleX(1.1);">المنطقة</div>
<div style="left:752px;top:235px;width:93px;height:11.5px;background:#ffffee;border:1px solid #a4a4a4;"></div>
<div style="left:741px;top:235px;width:12px;height:11.5px;background:#f4f4f4;border:1px solid #6c6c6c;"></div>
<svg style="left:741px;top:235.5px" width="11" height="11"><path d="M3.5 4.5h4.4l-2.2 2.4z" fill="#222"/></svg>
<div class="t red" style="left:690px;width:38.5px;top:235px;font-size:7.2px;">الزبون</div>
<div class="yl" style="left:472px;top:235.7px;width:230px;height:10.2px;"></div>
<div style="left:460px;top:235.7px;width:12px;height:10.2px;background:#f0f0f0;"></div>
<svg style="left:460px;top:235.3px" width="11" height="11"><path d="M3.5 4.5h4.4l-2.2 2.4z" fill="#222"/></svg>
<div class="btn" style="left:381.3px;top:233px;width:33.7px;height:13px;"></div>
<div class="btn" style="left:417px;top:233px;width:33.5px;height:13px;"></div>
<svg style="left:392.6px;top:234.6px" width="11.76" height="10.08" viewBox="0 0 14 12"><path d="M3.5 0.8h7l0.8 3.5h-8.6z" fill="#ffffff" stroke="#a8b8d8" stroke-width="0.6"/><rect x="0.8" y="3.8" width="12.4" height="5.2" rx="1.6" fill="#5c94ec" stroke="#3468c8" stroke-width="0.6"/><rect x="1.5" y="4.4" width="11" height="1.6" rx="0.8" fill="#9cc0fa"/><rect x="3" y="8" width="8" height="2.6" fill="#f8c828" stroke="#d09c10" stroke-width="0.5"/><rect x="3.4" y="10.2" width="7.2" height="1" fill="#f0f0f0"/></svg>
<svg style="left:428.4px;top:234.9px" width="11.479999999999999" height="9.84" viewBox="0 0 14 12"><path d="M1.5 5.2C2 2.6 5 2 8 2.6V0.8L12.5 3.6 8 6V4.4C5.5 4 3.5 4.2 1.5 5.2z" fill="#34b434" stroke="#1c8c1c" stroke-width="0.5"/><path d="M12.5 6.8C12 9.4 9 10 6 9.4V11.2L1.5 8.4 6 6V7.6C8.5 8 10.5 7.8 12.5 6.8z" fill="#34b434" stroke="#1c8c1c" stroke-width="0.5"/></svg>
<div style="left:381px;top:249px;width:501.5px;height:209px;background:#fff;border:1px solid #555;border-top:1.5px solid #222;"></div>
<div style="left:382px;top:250.5px;width:15.5px;height:206.5px;background:#f0f0f0;"></div>
<div style="left:382.7px;top:373.2px;width:10px;height:35.5px;background:#cdcdcd;"></div>
<svg style="left:382px;top:250px" width="16" height="208"><path d="M3.5 6l3-3 3 3" fill="none" stroke="#444" stroke-width="1.2"/><path d="M3.5 201l3 3 3-3" fill="none" stroke="#444" stroke-width="1.2"/></svg>
<div class="c" style="left:396.0px;width:155.0px;top:250.5px;font-size:7.2px;color:#222;">زبون</div>
<div class="c" style="left:551.0px;width:101.0px;top:250.5px;font-size:7.2px;color:#222;">المنطقة</div>
<div class="c" style="left:652.0px;width:101.0px;top:250.5px;font-size:7.2px;color:#222;">مندوب</div>
<div class="c" style="left:753.0px;width:75.5px;top:250.5px;font-size:7.2px;color:#222;">يوم</div>
<div style="left:397.5px;top:263.30px;width:432.5px;height:13.76px;background:#dceffe;"></div>
<div class="t" style="left:397.5px;width:151.5px;top:265.10px;font-size:7.0px;color:#1a1a1a;">خالد</div>
<div class="t" style="left:552.5px;width:97.5px;top:265.10px;font-size:7.0px;color:#1a1a1a;">الصالحية</div>
<div class="t" style="left:653.5px;width:97.5px;top:265.10px;font-size:7.0px;color:#1a1a1a;">عدنان أحمد</div>
<div class="c" style="left:847px;width:20px;top:265.30px;font-size:7.2px;color:#1a1a1a;">46</div>
<div class="t" style="left:397.5px;width:151.5px;top:278.86px;font-size:7.0px;color:#1a1a1a;">حسين</div>
<div class="t" style="left:552.5px;width:97.5px;top:278.86px;font-size:7.0px;color:#1a1a1a;">مشروع دمر</div>
<div class="t" style="left:653.5px;width:97.5px;top:278.86px;font-size:7.0px;color:#1a1a1a;">محمد خير عثمان</div>
<div class="c" style="left:847px;width:20px;top:279.06px;font-size:7.2px;color:#1a1a1a;">47</div>
<div style="left:397.5px;top:290.82px;width:432.5px;height:13.76px;background:#dceffe;"></div>
<div class="t" style="left:397.5px;width:151.5px;top:292.62px;font-size:7.0px;color:#1a1a1a;">بتول</div>
<div class="t" style="left:552.5px;width:97.5px;top:292.62px;font-size:7.0px;color:#1a1a1a;">ضاحية قدسيا</div>
<div class="t" style="left:653.5px;width:97.5px;top:292.62px;font-size:7.0px;color:#1a1a1a;">محمد خير عثمان</div>
<div class="c" style="left:847px;width:20px;top:292.82px;font-size:7.2px;color:#1a1a1a;">48</div>
<div class="c" style="left:847px;width:20px;top:306.58px;font-size:7.2px;color:#1a1a1a;">49</div>
<div style="left:397.5px;top:318.34px;width:432.5px;height:13.76px;background:#dceffe;"></div>
<div class="t" style="left:552.5px;width:97.5px;top:320.14px;font-size:7.0px;color:#1a1a1a;">السيدة زينب</div>
<div class="t" style="left:653.5px;width:97.5px;top:320.14px;font-size:7.0px;color:#1a1a1a;">أحمد حسين</div>
<div class="t" style="left:754.5px;width:72.0px;top:320.14px;font-size:7.0px;color:#1a1a1a;">الأربعاء</div>
<div class="c" style="left:847px;width:20px;top:320.34px;font-size:7.2px;color:#1a1a1a;">50</div>
<div class="t" style="left:653.5px;width:97.5px;top:333.90px;font-size:7.0px;color:#1a1a1a;">أحمد خالد</div>
<div class="c" style="left:847px;width:20px;top:334.10px;font-size:7.2px;color:#1a1a1a;">51</div>
<div style="left:397.5px;top:345.86px;width:432.5px;height:13.76px;background:#dceffe;"></div>
<div class="t" style="left:397.5px;width:151.5px;top:347.66px;font-size:7.0px;color:#1a1a1a;">عبد الله</div>
<div class="t" style="left:552.5px;width:97.5px;top:347.66px;font-size:7.0px;color:#1a1a1a;">المزة</div>
<div class="t" style="left:653.5px;width:97.5px;top:347.66px;font-size:7.0px;color:#1a1a1a;">طه عفيف عثمان</div>
<div class="c" style="left:847px;width:20px;top:347.86px;font-size:7.2px;color:#1a1a1a;">52</div>
<div class="t" style="left:397.5px;width:151.5px;top:361.42px;font-size:7.0px;color:#1a1a1a;">مهدي</div>
<div class="t" style="left:552.5px;width:97.5px;top:361.42px;font-size:7.0px;color:#1a1a1a;">مشروع دمر</div>
<div class="t" style="left:653.5px;width:97.5px;top:361.42px;font-size:7.0px;color:#1a1a1a;">عبد الله عثمان</div>
<div class="c" style="left:847px;width:20px;top:361.62px;font-size:7.2px;color:#1a1a1a;">53</div>
<div style="left:397.5px;top:373.38px;width:432.5px;height:13.76px;background:#dceffe;"></div>
<div class="t" style="left:397.5px;width:151.5px;top:375.18px;font-size:7.0px;color:#1a1a1a;">طه عفيف</div>
<div class="t" style="left:552.5px;width:97.5px;top:375.18px;font-size:7.0px;color:#1a1a1a;">الصالحية</div>
<div class="t" style="left:653.5px;width:97.5px;top:375.18px;font-size:7.0px;color:#1a1a1a;">عبد الله عثمان</div>
<div class="c" style="left:847px;width:20px;top:375.38px;font-size:7.2px;color:#1a1a1a;">54</div>
<div class="c" style="left:847px;width:20px;top:389.14px;font-size:7.2px;color:#1a1a1a;">55</div>
<div style="left:397.5px;top:400.90px;width:432.5px;height:13.76px;background:#dceffe;"></div>
<div class="t" style="left:552.5px;width:97.5px;top:402.70px;font-size:7.0px;color:#1a1a1a;">المزة</div>
<div class="t" style="left:653.5px;width:97.5px;top:402.70px;font-size:7.0px;color:#1a1a1a;">عدنان أحمد</div>
<div class="c" style="left:847px;width:20px;top:402.90px;font-size:7.2px;color:#1a1a1a;">56</div>
<div class="t" style="left:552.5px;width:97.5px;top:416.46px;font-size:7.0px;color:#1a1a1a;">السيدة زينب</div>
<div class="t" style="left:653.5px;width:97.5px;top:416.46px;font-size:7.0px;color:#1a1a1a;">محمد خير عثمان</div>
<div class="c" style="left:847px;width:20px;top:416.66px;font-size:7.2px;color:#1a1a1a;">57</div>
<div style="left:397.5px;top:428.42px;width:432.5px;height:13.76px;background:#dceffe;"></div>
<div class="t" style="left:397.5px;width:151.5px;top:430.22px;font-size:7.0px;color:#1a1a1a;">خالد</div>
<div class="t" style="left:552.5px;width:97.5px;top:430.22px;font-size:7.0px;color:#1a1a1a;">الصالحية</div>
<div class="t" style="left:653.5px;width:97.5px;top:430.22px;font-size:7.0px;color:#1a1a1a;">محمد خير عثمان</div>
<div class="c" style="left:847px;width:20px;top:430.42px;font-size:7.2px;color:#1a1a1a;">58</div>
<div class="c" style="left:847px;width:20px;top:444.18px;font-size:7.2px;color:#1a1a1a;">59</div>
<div style="left:397.5px;top:262.80px;width:483.5px;height:1px;background:#c8c8c8;"></div>
<div style="left:397.5px;top:276.56px;width:432.5px;height:1px;background:#c2c2c2;"></div>
<div style="left:830px;top:276.56px;width:51px;height:1px;background:#e2e2e2;"></div>
<div style="left:397.5px;top:290.32px;width:432.5px;height:1px;background:#c2c2c2;"></div>
<div style="left:830px;top:290.32px;width:51px;height:1px;background:#e2e2e2;"></div>
<div style="left:397.5px;top:304.08px;width:432.5px;height:1px;background:#c2c2c2;"></div>
<div style="left:830px;top:304.08px;width:51px;height:1px;background:#e2e2e2;"></div>
<div style="left:397.5px;top:317.84px;width:432.5px;height:1px;background:#c2c2c2;"></div>
<div style="left:830px;top:317.84px;width:51px;height:1px;background:#e2e2e2;"></div>
<div style="left:397.5px;top:331.60px;width:432.5px;height:1px;background:#c2c2c2;"></div>
<div style="left:830px;top:331.60px;width:51px;height:1px;background:#e2e2e2;"></div>
<div style="left:397.5px;top:345.36px;width:432.5px;height:1px;background:#c2c2c2;"></div>
<div style="left:830px;top:345.36px;width:51px;height:1px;background:#e2e2e2;"></div>
<div style="left:397.5px;top:359.12px;width:432.5px;height:1px;background:#c2c2c2;"></div>
<div style="left:830px;top:359.12px;width:51px;height:1px;background:#e2e2e2;"></div>
<div style="left:397.5px;top:372.88px;width:432.5px;height:1px;background:#c2c2c2;"></div>
<div style="left:830px;top:372.88px;width:51px;height:1px;background:#e2e2e2;"></div>
<div style="left:397.5px;top:386.64px;width:432.5px;height:1px;background:#c2c2c2;"></div>
<div style="left:830px;top:386.64px;width:51px;height:1px;background:#e2e2e2;"></div>
<div style="left:397.5px;top:400.40px;width:432.5px;height:1px;background:#c2c2c2;"></div>
<div style="left:830px;top:400.40px;width:51px;height:1px;background:#e2e2e2;"></div>
<div style="left:397.5px;top:414.16px;width:432.5px;height:1px;background:#c2c2c2;"></div>
<div style="left:830px;top:414.16px;width:51px;height:1px;background:#e2e2e2;"></div>
<div style="left:397.5px;top:427.92px;width:432.5px;height:1px;background:#c2c2c2;"></div>
<div style="left:830px;top:427.92px;width:51px;height:1px;background:#e2e2e2;"></div>
<div style="left:397.5px;top:441.68px;width:432.5px;height:1px;background:#c2c2c2;"></div>
<div style="left:830px;top:441.68px;width:51px;height:1px;background:#e2e2e2;"></div>
<div style="left:397.5px;top:455.44px;width:432.5px;height:1px;background:#c2c2c2;"></div>
<div style="left:830px;top:455.44px;width:51px;height:1px;background:#e2e2e2;"></div>
<div style="left:552.0px;top:250.5px;width:1px;height:12.5px;background:#dcdcdc;"></div>
<div style="left:552.0px;top:263.30px;width:1px;height:192.70px;background:#8e8e8e;"></div>
<div style="left:653.0px;top:250.5px;width:1px;height:12.5px;background:#dcdcdc;"></div>
<div style="left:653.0px;top:263.30px;width:1px;height:192.70px;background:#8e8e8e;"></div>
<div style="left:754.0px;top:250.5px;width:1px;height:12.5px;background:#dcdcdc;"></div>
<div style="left:754.0px;top:263.30px;width:1px;height:192.70px;background:#8e8e8e;"></div>
<div style="left:829.5px;top:250.5px;width:1px;height:206.5px;background:#e4e4e4;"></div>
<div style="left:397px;top:250.5px;width:1px;height:206.5px;background:#d0d0d0;"></div>
<div style="left:478px;top:25px;width:110px;height:165px;background:#f2f2f2;border:1px solid #c4c4c4;border-left-color:#8c8c8c;box-shadow:1.5px 1.5px 1.5px rgba(0,0,0,0.55);"></div>
<div style="left:570px;top:26px;width:17px;height:163px;background:#f5f5f5;"></div>
<div style="left:560px;top:25px;width:27px;height:1px;background:#f2f2f2;"></div>
<div class="t " style="left:361px;width:200px;top:26.200000000000003px;font-size:7.1px;color:#1a1a1a;">الخطة اليومية</div>
<div class="t " style="left:361px;width:200px;top:38.2px;font-size:7.1px;color:#1a1a1a;">الحركة اليومية</div>
<div class="t " style="left:361px;width:200px;top:50.2px;font-size:7.1px;color:#1a1a1a;">التقرير اليومي</div>
<div class="t " style="left:361px;width:200px;top:62.2px;font-size:7.1px;color:#1a1a1a;">تقرير الأنجاز</div>
<div class="t " style="left:361px;width:200px;top:74.2px;font-size:7.1px;color:#1a1a1a;">الشكاوى</div>
<div class="t " style="left:361px;width:200px;top:90.2px;font-size:7.1px;color:#1a1a1a;">الزبائن</div>
<div class="t " style="left:361px;width:200px;top:102.2px;font-size:7.1px;color:#1a1a1a;">لائحة الزبائن</div>
<div class="t " style="left:361px;width:200px;top:117.7px;font-size:7.1px;color:#1a1a1a;">المناطق</div>
<div class="t " style="left:361px;width:200px;top:129.7px;font-size:7.1px;color:#1a1a1a;">المندوبين</div>
<div class="t " style="left:361px;width:200px;top:141.7px;font-size:7.1px;color:#1a1a1a;">الخطة الاسبوعية</div>
<div class="t " style="left:361px;width:200px;top:153.7px;font-size:7.1px;color:#1a1a1a;">بطاقات الآليات</div>
<div class="t " style="left:361px;width:200px;top:165.7px;font-size:7.1px;color:#1a1a1a;">لائحة الآليات</div>
<div class="t " style="left:361px;width:200px;top:177.7px;font-size:7.1px;color:#1a1a1a;">حركة الآليات</div>
<div style="left:481px;top:87.5px;width:85px;height:1px;background:#d0d0d0;"></div>
<div style="left:481px;top:115.5px;width:85px;height:1px;background:#d0d0d0;"></div>
</body></html>
